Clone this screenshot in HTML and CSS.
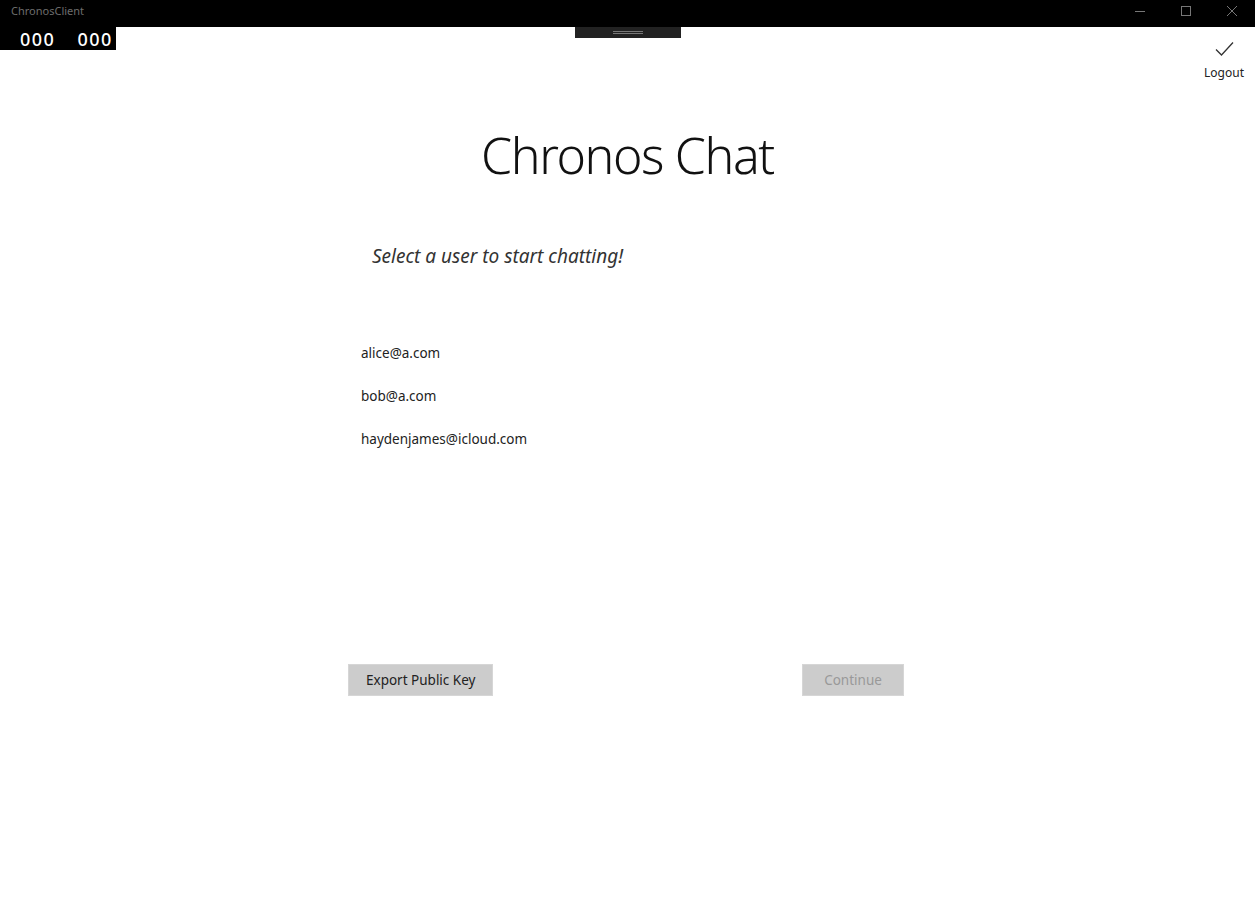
FILE: index.html
```html
<!DOCTYPE html>
<html>
<head>
<meta charset="utf-8">
<link rel="stylesheet" href="styles.css">
</head>
<body>
<div class="titlebar">
  <span class="app-name">ChronosClient</span>
  <div class="win-controls">
    <span class="wc"><svg width="12" height="12" viewBox="0 0 12 12"><path d="M1 6.5h10" stroke="#777" stroke-width="1"/></svg></span>
    <span class="wc"><svg width="12" height="12" viewBox="0 0 12 12"><rect x="1.5" y="1.5" width="9" height="9" fill="none" stroke="#777" stroke-width="1"/></svg></span>
    <span class="wc"><svg width="12" height="12" viewBox="0 0 12 12"><path d="M1 1l10 10M11 1L1 11" stroke="#777" stroke-width="1"/></svg></span>
  </div>
</div>
<div class="counter"><span>000</span><span>000</span></div>
<div class="handle"><span></span></div>
<div class="logout">
  <svg width="22" height="18" viewBox="0 0 22 18"><path d="M3 9.5l5.5 5.5L20 2.5" fill="none" stroke="#333" stroke-width="1.3"/></svg>
  <span>Logout</span>
</div>
<main class="page">
  <h1 class="title">Chronos Chat</h1>
  <div class="content">
    <p class="prompt">Select a user to start chatting!</p>
    <ul class="users">
      <li>alice@a.com</li>
      <li>bob@a.com</li>
      <li>haydenjames@icloud.com</li>
    </ul>
    <div class="actions">
      <button class="btn">Export Public Key</button>
      <button class="btn disabled">Continue</button>
    </div>
  </div>
</main>
</body>
</html>
```
FILE: styles.css
```css
* { box-sizing: border-box; }
html, body { margin: 0; padding: 0; background: #fff; }
body {
  width: 1255px;
  height: 908px;
  font-family: "Noto Sans", "Open Sans", sans-serif;
  color: #222;
  position: relative;
  overflow: hidden;
}
.titlebar {
  height: 27px;
  background: #000;
  display: flex;
  align-items: center;
  justify-content: space-between;
  padding-left: 11px;
}
.app-name {
  color: #6d6d6d;
  font-size: 11px;
  margin-top: -6px;
}
.win-controls { display: flex; height: 100%; }
.wc {
  width: 46px;
  display: flex;
  align-items: center;
  justify-content: center;
  margin-top: -5px;
}
.counter {
  position: absolute;
  left: 0;
  top: 27px;
  width: 116px;
  height: 23px;
  background: #000;
  color: #fff;
  font-size: 18px;
  font-weight: 500;
  display: flex;
  gap: 22px;
  padding-left: 20px;
  align-items: center;
  line-height: 1;
  letter-spacing: 1.5px;
}
.handle {
  position: absolute;
  left: 575px;
  top: 27px;
  width: 106px;
  height: 11px;
  background: #222;
  display: flex;
  align-items: center;
  justify-content: center;
}
.handle span {
  width: 30px;
  height: 3px;
  border-top: 1px solid #777;
  border-bottom: 1px solid #777;
}
.logout {
  position: absolute;
  right: 9px;
  top: 40px;
  width: 44px;
  display: flex;
  flex-direction: column;
  align-items: center;
  font-size: 12px;
  color: #222;
}
.logout span { margin-top: 6px; }
.page {
  display: flex;
  flex-direction: column;
  align-items: center;
}
.title {
  margin: 94px 0 0;
  font-weight: 300;
  font-size: 50px;
  line-height: 68px;
  color: #111;
  letter-spacing: -1.4px;
}
.content {
  width: 556px;
  margin-right: 3px;
}
.prompt {
  margin: 54px 0 0 24px;
  font-style: italic;
  font-size: 19px;
  line-height: 26px;
  color: #333;
}
.users {
  list-style: none;
  margin: 74px 0 0 13px;
  padding: 0;
}
.users li {
  font-size: 13.5px;
  height: 43px;
  line-height: 20px;
  color: #222;
}
.actions {
  margin-top: 192px;
  display: flex;
  justify-content: space-between;
}
.btn {
  font-family: inherit;
  font-size: 13.5px;
  background: #ccc;
  border: 1px solid #d6d6d6;
  color: #222;
  height: 32px;
  padding: 0 17px;
}
.btn.disabled {
  color: #999;
  width: 102px;
}
```
